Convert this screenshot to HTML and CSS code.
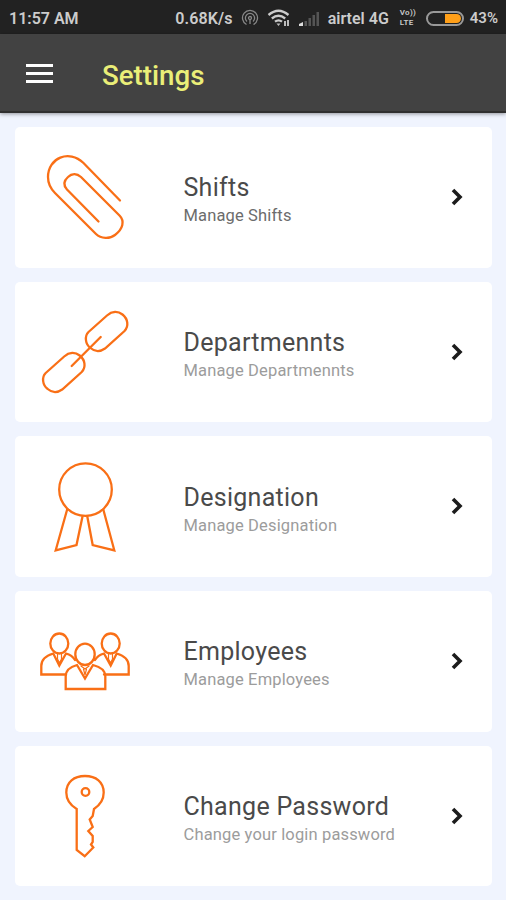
FILE: index.html
```html
<!DOCTYPE html>
<html lang="en">

<head>
  <meta charset="UTF-8">
  <meta name="viewport" content="width=device-width, initial-scale=1.0">
  <title>Settings</title>
  <link rel="stylesheet" href="styles.css">
</head>

<body>
  <div class="statusbar">
    <span class="time">11:57 AM</span>
    <span class="speed">0.68K/s</span>
    <svg class="hotspot" width="18" height="18" viewBox="0 0 18 18">
      <path d="M5.5 15.5A7.5 7.5 0 1 1 12.5 15.5M6 12.5A4.6 4.6 0 1 1 12 12.5" />
      <circle cx="9" cy="9" r="1.5" />
      <path d="M9 10v5" />
    </svg>
    <svg class="wifi" width="24" height="18" viewBox="0 0 24 18">
      <path d="M1.5 6Q11.5-2.5 21.5 6M4.8 9.5Q11.5 4 18.2 9.5M8 12.7Q11.5 10 15 12.7" />
      <path class="fill" d="M9.5 14.5h4L11.5 17zM17 12h2v5h-2zM20 11h2v6h-2z" />
    </svg>
    <svg class="signal" width="22" height="18" viewBox="0 0 22 18">
      <path class="on" d="M1 17v-2l4-2v4z" />
      <path d="M6.500 17v-5h2.500v5zM10.500 17V9h2.500v8zM14.500 17V6h2.500v11zM18.500 17V3h2.500v14z" />
    </svg>
    <span class="carrier">airtel 4G</span>
    <span class="volte"><span>Vo))</span><span>LTE</span></span>
    <span class="battery"><span class="level"></span></span>
    <span class="percent">43%</span>
  </div>

  <header>
    <button class="menu" aria-label="Menu"><span></span><span></span><span></span></button>
    <h1>Settings</h1>
  </header>

  <main>
    <a class="card first">
      <svg class="icon" viewBox="0 0 100 100">
        <path d="M85 53.5L48.500 16C34 2 13 11 13 30C13 37 15 41 20 46L61 87C66 92 75 92 80 88C88 82 90 74 84.500 68.500L46 30C42 26.500 37 26 33 30C28.500 34 28 38 32 42.500L63.500 74.500" />
      </svg>
      <div class="text">
        <h2>Shifts</h2>
        <p>Manage Shifts</p>
      </div>
      <svg class="arrow" viewBox="0 0 14 20"><path d="M3 3l7 7-7 7" /></svg>
    </a>

    <a class="card">
      <svg class="icon" viewBox="0 0 100 100">
        <path d="M53.5 30L72 13.500C77 9 83 9 87.500 12.500C93 17 94 24 89.500 29L70 46.500C65 50 60 50 55.500 46C50 42 49.500 34 53.500 30Z" />
        <path d="M10.700 71L29.200 54.500C34.200 50 40.200 50 44.700 53.500C50.200 58 51.200 65 46.700 70L27.200 87.500C22.200 91 17.200 91 12.700 87C7.200 83 6.700 75 10.700 71Z" />
        <path d="M36.700 64L65.700 35" />
      </svg>
      <div class="text">
        <h2>Departmennts</h2>
        <p>Manage Departmennts</p>
      </div>
      <svg class="arrow" viewBox="0 0 14 20"><path d="M3 3l7 7-7 7" /></svg>
    </a>

    <a class="card">
      <svg class="icon" viewBox="0 0 100 100">
        <circle cx="50.5" cy="32.6" r="26.3" />
        <path d="M32.300 52L20.700 93.300L41.500 88L47.500 59.500M52.300 59.500L57.700 88L79.300 93.300L68.300 52.500" />
      </svg>
      <div class="text">
        <h2>Designation</h2>
        <p>Manage Designation</p>
      </div>
      <svg class="arrow" viewBox="0 0 14 20"><path d="M3 3l7 7-7 7" /></svg>
    </a>

    <a class="card">
      <svg class="icon" viewBox="0 0 100 100">
        <ellipse cx="24.300" cy="32.500" rx="9" ry="10" />
        <ellipse cx="75.700" cy="32.500" rx="9" ry="10" />
        <ellipse cx="50" cy="43.300" rx="9.700" ry="10.700" />
        <path d="M31 63.500H6.300V55Q6.300 46 18.300 42.500L24.300 54.500L31 42.500Q37 44 40 49" />
        <path d="M69 63.500H93.700V55Q93.700 46 81.700 42.500L75.700 54.500L69 42.500Q63 44 60 49" />
        <path d="M30.700 78V65Q31 57 42 54L50 67.500L58 54Q70 57 70.300 65V78Z" />
        <path class="tie" d="M22.500 43v5l2 4 2-4v-5M73.500 43v5l2 4 2-4v-5M46 55l4 3 4-3M48.500 58l1.500 6 1.500-6" />
      </svg>
      <div class="text">
        <h2>Employees</h2>
        <p>Manage Employees</p>
      </div>
      <svg class="arrow" viewBox="0 0 14 20"><path d="M3 3l7 7-7 7" /></svg>
    </a>

    <a class="card">
      <svg class="icon" viewBox="0 0 100 100">
        <path d="M41.700 43C35 39 31.300 33 31.300 26.500C31.300 16 39 10 50 10C61 10 68.700 16 68.700 26.500C68.700 33 65 39 59 43L57.700 50L54.700 53.500L57.700 61L53.300 65L57.700 70V76L56 78.500L58.300 81.500L49.700 90.200L41.700 84Z" />
        <circle cx="50.500" cy="26" r="3.800" />
      </svg>
      <div class="text">
        <h2>Change Password</h2>
        <p>Change your login password</p>
      </div>
      <svg class="arrow" viewBox="0 0 14 20"><path d="M3 3l7 7-7 7" /></svg>
    </a>
  </main>
</body>

</html>
```
FILE: styles.css
```css
* {
  margin: 0;
  padding: 0;
  box-sizing: border-box;
}

body {
  height: 900px;
  overflow: hidden;
  background-color: #f0f4fe;
  font-family: Roboto, sans-serif;
}

.statusbar {
  display: flex;
  align-items: center;
  height: 34px;
  padding: 2px 8px 0 9px;
  background-color: #222;
  color: #ccc;
  font-size: 16px;
  font-weight: 600;
  white-space: nowrap;
}

.statusbar svg {
  flex: none;
}

.speed {
  margin-left: auto;
  letter-spacing: .15px;
}

.hotspot {
  margin-left: 8px;
  fill: none;
  stroke: #888;
  stroke-width: 1.3;
}

.wifi {
  margin-left: 8px;
  fill: none;
  stroke: #ccc;
  stroke-width: 2.3;
}

.wifi .fill {
  fill: #bbb;
  stroke: none;
}

.signal {
  margin-left: 7px;
  fill: #555;
}

.signal .on {
  fill: #ddd;
}

.carrier {
  margin-left: 8px;
}

.volte {
  display: flex;
  flex-direction: column;
  width: 17px;
  margin-left: 11px;
  font-size: 8px;
  line-height: 10px;
  letter-spacing: .3px;
}

.battery {
  display: flex;
  justify-content: flex-end;
  width: 38px;
  height: 15px;
  margin-left: 9px;
  padding: 1px;
  border: 2px solid #999;
  border-radius: 8px;
}

.level {
  width: 16px;
  background-color: #ff9f18;
  border-radius: 0 5px 5px 0;
}

.percent {
  margin-left: 6px;
  font-size: 15px;
}

header {
  display: flex;
  align-items: center;
  height: 79px;
  padding: 1px 0 0 26px;
  background-color: #424242;
  border-bottom: 2px solid #303030;
  box-shadow: 0 1px 4px rgba(0, 0, 0, .4);
}

.menu {
  display: flex;
  flex-direction: column;
  gap: 5px;
  width: 27px;
  border: none;
  background: none;
}

.menu span {
  height: 3px;
  background-color: #fff;
}

h1 {
  margin: 4px 0 0 49px;
  color: #eaee78;
  font-size: 27.7px;
  font-weight: 500;
}

main {
  display: flex;
  flex-direction: column;
  gap: 14px;
  padding: 14px 14px 0 15px;
}

.card {
  display: flex;
  align-items: center;
  height: 140.7px;
  padding: 0 28.5px 0 20px;
  background-color: #fff;
  border-radius: 5px;
}

.icon {
  width: 100px;
  height: 100px;
  fill: none;
  stroke: #f96f16;
  stroke-width: 2.3;
  stroke-linecap: round;
}

.tie {
  stroke-width: 1.2;
}

.text {
  flex: 1;
  padding-top: 8px;
  margin-left: 48.5px;
}

h2 {
  color: #4a4a4a;
  font-size: 25px;
  font-weight: 400;
  line-height: 30px;
  letter-spacing: .28px;
}

p {
  color: #9c9c9c;
  font-size: 16.5px;
  line-height: 26px;
  letter-spacing: .15px;
}

.first p {
  color: #6c6c6c;
}

.arrow {
  width: 14px;
  height: 20px;
  margin-bottom: 1px;
  fill: none;
  stroke: #1c1c1c;
  stroke-width: 3.6;
}
```
